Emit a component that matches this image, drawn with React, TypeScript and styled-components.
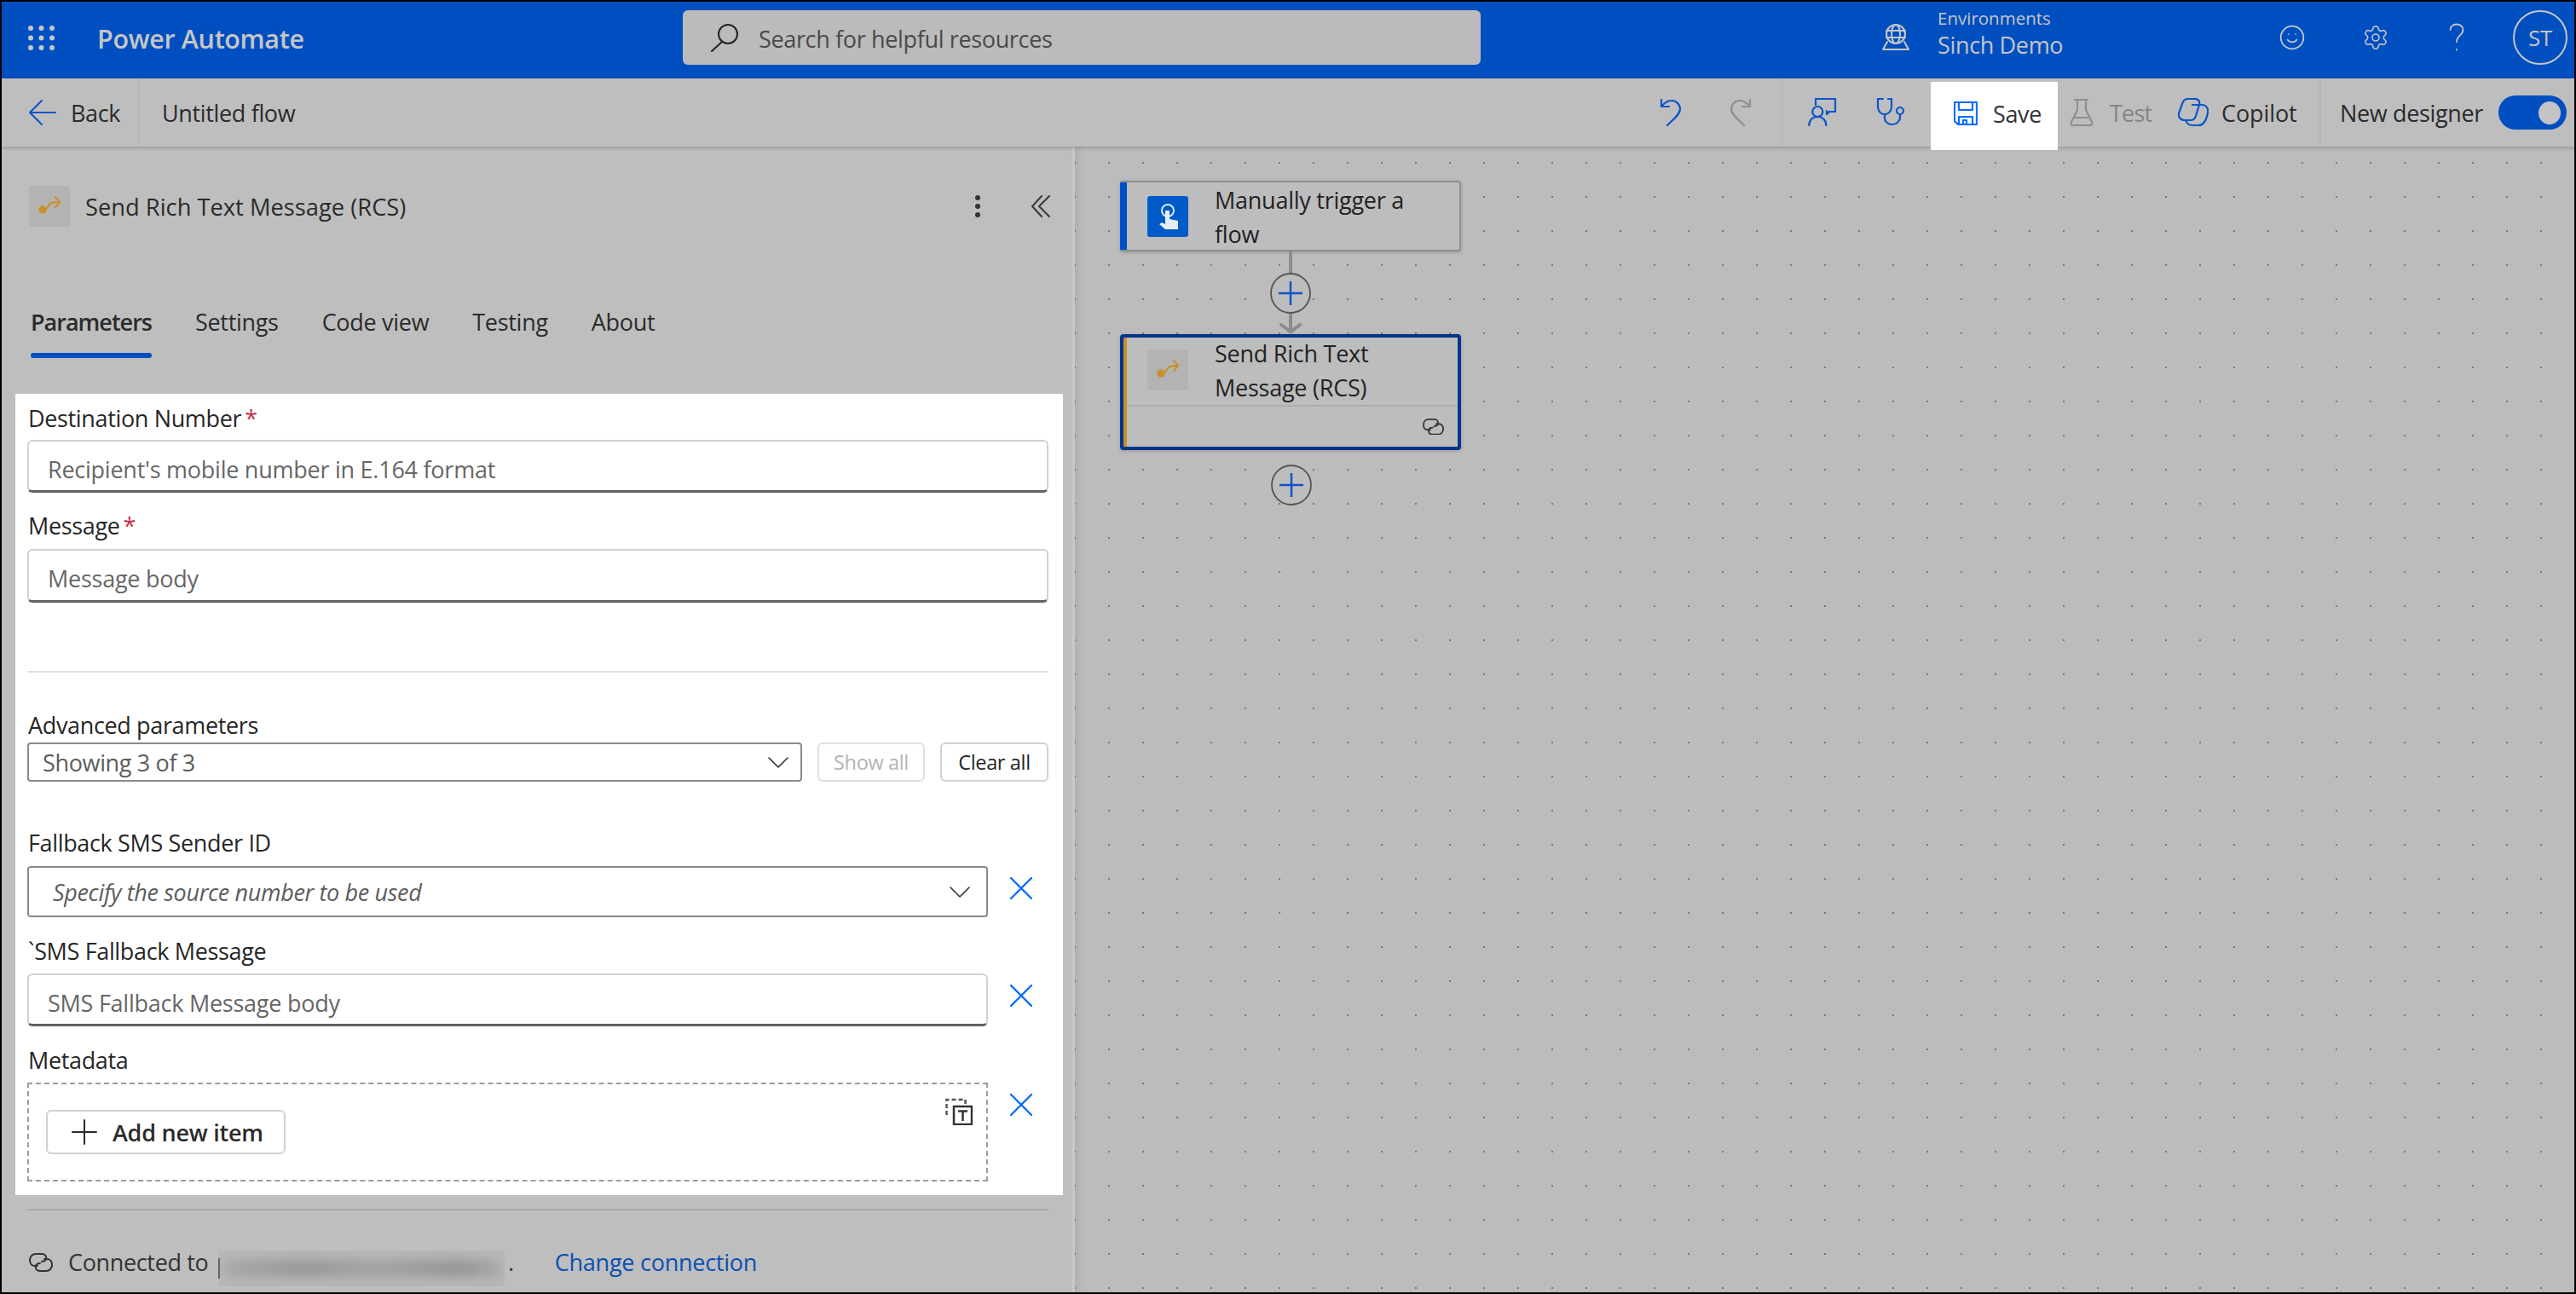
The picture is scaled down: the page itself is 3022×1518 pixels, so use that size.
import React from 'react';
import styled, { createGlobalStyle } from 'styled-components';
import { Settings, Smile } from 'lucide-react';

const GlobalStyle = createGlobalStyle`
  html, body {
    margin: 0;
    padding: 0;
    background: #000;
  }
  * {
    box-sizing: border-box;
  }
`;

const Page = styled.div`
  width: 3022px;
  height: 1518px;
  border: 2px solid #000;
  overflow: hidden;
  display: flex;
  flex-direction: column;
  background: #bdbdbd;
  color: #2b2b2b;
  font-family: 'Open Sans', 'Liberation Sans', sans-serif;
  font-size: 27px;
  letter-spacing: -0.35px;
`;

/* top blue bar */
const Header = styled.header`
  height: 90px;
  flex: none;
  display: flex;
  align-items: center;
  padding-bottom: 6px;
  background: #004fc0;
  color: #c6c6c6;
`;

const Brand = styled.div`
  width: 799px;
  flex: none;
  display: flex;
  align-items: center;
  padding-left: 31px;
`;

const ProductName = styled.span`
  margin-left: 50px;
  padding-top: 2px;
  font-size: 30.5px;
  font-weight: 600;
`;

const SearchBox = styled.div`
  width: 936px;
  height: 64px;
  flex: none;
  display: flex;
  align-items: center;
  gap: 23px;
  padding-left: 32px;
  border-radius: 6px;
  background: #bbb;
  color: #4a4a4a;

  > span {
    padding-top: 3px;
  }
`;

const EnvIcon = styled.svg`
  margin-left: 471px;
  flex: none;
`;

const EnvText = styled.div`
  width: 400px;
  flex: none;
  margin-left: 33px;
  align-self: flex-start;
  padding-top: 5px;
`;

const EnvLabel = styled.div`
  font-size: 20.5px;
  line-height: 28px;
  letter-spacing: 0;
`;

const EnvName = styled.div`
  font-size: 27px;
  line-height: 36px;
`;

const HeaderIcon = styled.div<{ $left: number }>`
  width: 32px;
  flex: none;
  margin-left: ${p => p.$left}px;
  display: flex;
  justify-content: center;
`;

const Avatar = styled.div`
  width: 64px;
  height: 64px;
  flex: none;
  margin-left: 50px;
  display: flex;
  align-items: center;
  justify-content: center;
  border: 2px solid #c6c6c6;
  border-radius: 50%;
  font-size: 26px;
`;

/* second bar */
const Toolbar = styled.div`
  position: relative;
  z-index: 2;
  height: 80px;
  flex: none;
  display: flex;
  align-items: center;
  background: #bebebe;
  box-shadow: 0 1px 5px rgba(0, 0, 0, 0.25);
`;

const BackCell = styled.div`
  width: 162px;
  height: 80px;
  display: flex;
  align-items: center;
  gap: 17px;
  padding-left: 32px;
  border-right: 2px solid #b5b5b5;
`;

const FlowName = styled.span`
  margin-left: 26px;
`;

const ToolRow = styled.div`
  margin-left: auto;
  height: 80px;
  display: flex;
  align-items: center;
  padding-right: 9px;
`;

const Tool = styled.div`
  width: 80px;
  display: flex;
  justify-content: center;
`;

const ToolDivider = styled.div<{ $left: number; $right: number }>`
  width: 2px;
  height: 80px;
  margin: 0 ${p => p.$right}px 0 ${p => p.$left}px;
  background: #b5b5b5;
`;

const SaveButton = styled.div`
  align-self: flex-start;
  width: 149px;
  height: 80px;
  margin-top: 4px;
  margin-left: 7px;
  display: flex;
  align-items: center;
  gap: 18px;
  padding: 0 0 6px 27px;
  background: #fff;
  color: #333;
`;

const LabelTool = styled.div<{ $w: number; $pad: number; $gap: number; $muted?: boolean }>`
  width: ${p => p.$w}px;
  display: flex;
  align-items: center;
  gap: ${p => p.$gap}px;
  padding-left: ${p => p.$pad}px;
  color: ${p => (p.$muted ? '#858585' : '#2b2b2b')};
  letter-spacing: ${p => (p.$muted ? '-0.8px' : '-0.1px')};
`;

const DesignerLabel = styled.div`
  width: 186px;
  margin-left: 22px;
`;

const Toggle = styled.div`
  width: 80px;
  height: 40px;
  display: flex;
  align-items: center;
  justify-content: flex-end;
  padding-right: 7px;
  border-radius: 20px;
  background: #004fc0;
`;

const ToggleKnob = styled.div`
  width: 26px;
  height: 27px;
  border-radius: 50%;
  background: #c4c4c4;
`;

const Body = styled.div`
  flex: 1;
  min-height: 0;
  display: flex;
`;

/* left panel */
const Panel = styled.aside`
  width: 1256px;
  flex: none;
  display: flex;
  flex-direction: column;
  background: #bebebe;
`;

const PanelHead = styled.div`
  height: 48px;
  margin-top: 46px;
  display: flex;
  align-items: center;
  padding-left: 32px;
`;

const ConnectorTile = styled.div`
  width: 48px;
  height: 48px;
  flex: none;
  border-radius: 3px;
  background: #b3b3b3;
`;

const PanelTitle = styled.span`
  margin-left: 18px;
  font-size: 27.3px;
  letter-spacing: 0;
`;

const PanelTools = styled.div`
  margin-left: auto;
  display: flex;
  align-items: center;
  gap: 59px;
  padding-right: 26px;
`;

const Tabs = styled.div`
  margin-top: 94px;
  display: flex;
  gap: 51px;
  padding-left: 34px;
`;

const Tab = styled.div<{ $active?: boolean }>`
  line-height: 36px;
  font-weight: ${p => (p.$active ? 600 : 400)};
  letter-spacing: ${p => (p.$active ? '-1px' : '-0.3px')};

  &::after {
    content: '';
    display: block;
    height: 6px;
    margin-top: 18px;
    border-radius: 3px;
    background: ${p => (p.$active ? '#004fc0' : 'transparent')};
  }
`;

const Form = styled.div`
  width: 1229px;
  height: 940px;
  margin: 42px 0 0 16px;
  padding: 12px 17px 0 14px;
  background: #fff;
`;

const FieldLabel = styled.div<{ $top?: number }>`
  height: 36px;
  line-height: 33px;
  margin-top: ${p => p.$top ?? 0}px;
  padding-left: 1px;
  color: #262626;
`;

const Required = styled.span`
  margin-left: 4px;
  color: #c4314b;
`;

const TextInput = styled.div<{ $top: number; $h: number }>`
  flex: 1;
  height: ${p => p.$h}px;
  margin-top: ${p => p.$top}px;
  display: flex;
  align-items: center;
  padding: 7px 0 0 22px;
  border: 2px solid #d1d1d1;
  border-bottom: 3px solid #616161;
  border-radius: 6px;
  color: #666;
  letter-spacing: -0.25px;
`;

const FormRule = styled.div`
  height: 2px;
  margin-top: 80px;
  background: #e0e0e0;
`;

const Select = styled.div<{ $h: number; $pad: number; $padRight: number; $italic?: boolean }>`
  flex: 1;
  height: ${p => p.$h}px;
  display: flex;
  align-items: center;
  justify-content: space-between;
  padding: 0 ${p => p.$padRight}px 0 ${p => p.$pad}px;
  border: 2px solid #8a8a8a;
  border-radius: 4px;
  color: #5c5c5c;
  font-style: ${p => (p.$italic ? 'italic' : 'normal')};
`;

const AdvancedRow = styled.div`
  margin-top: 1px;
  display: flex;
  gap: 18px;
`;

const SmallButton = styled.div<{ $w: number; $muted?: boolean }>`
  width: ${p => p.$w}px;
  height: 46px;
  flex: none;
  display: flex;
  align-items: center;
  justify-content: center;
  border: 2px solid ${p => (p.$muted ? '#e0e0e0' : '#d1d1d1')};
  border-radius: 6px;
  font-size: 23.5px;
  color: ${p => (p.$muted ? '#b3b3b3' : '#262626')};
`;

const RemovableRow = styled.div<{ $top: number }>`
  margin-top: ${p => p.$top}px;
  display: flex;
  align-items: flex-start;
  gap: 26px;
  width: 1179px;

  > svg {
    flex: none;
    margin-top: 13px;
  }
`;

const DashedBox = styled.div`
  flex: 1;
  height: 116px;
  display: flex;
  align-items: flex-start;
  justify-content: space-between;
  padding: 16px 16px 0 20px;
  border: 2px dashed #9c9c9c;
`;

const AddButton = styled.div`
  width: 281px;
  height: 52px;
  margin-top: 14px;
  display: flex;
  align-items: center;
  gap: 18px;
  padding-left: 28px;
  border: 2px solid #d1d1d1;
  border-radius: 6px;
  font-weight: 600;
  letter-spacing: -0.25px;
`;

const PanelRule = styled.div`
  height: 2px;
  margin: 16px 28px 0 31px;
  background: #a8a8a8;
`;

const ConnectionRow = styled.div`
  height: 49px;
  margin-top: 41px;
  display: flex;
  align-items: flex-start;
  padding-left: 32px;
  line-height: 40px;
  color: #333;

  > svg {
    flex: none;
    margin-top: 9px;
  }
`;

const ConnectedText = styled.span`
  margin-left: 18px;
  width: 176px;
`;

const BlurredName = styled.div`
  width: 336px;
  height: 42px;
  margin-top: 6px;
  overflow: hidden;
  background: linear-gradient(#5e5e5e, #5e5e5e) left 9px / 2px 24px no-repeat, #b7b7b7;
`;

const BlurredInk = styled.div`
  width: 322px;
  height: 20px;
  margin: 11px 0 0 8px;
  background: linear-gradient(90deg, #a8a8a8 0%, #989898 28%, #a4a4a4 55%, #969696 85%, #a8a8a8 100%);
  filter: blur(6px);
`;

const Dot = styled.span`
  margin-left: 4px;
`;

const ChangeLink = styled.span`
  margin-left: 48px;
  color: #0b4fb3;
  letter-spacing: -0.25px;
`;

const Splitter = styled.div`
  width: 3px;
  flex: none;
  background: #c8c8c8;
`;

/* designer canvas */
const Canvas = styled.main`
  flex: 1;
  display: flex;
  flex-direction: column;
  padding: 40px 0 0 53px;
  background-color: #bcbcbc;
  background-image: radial-gradient(circle, #7a7a7a 1px, transparent 1.4px);
  background-size: 40px 40px;
  background-position: 20px -1px;
  box-shadow: inset 12px 0 12px -10px rgba(0, 0, 0, 0.1);
`;

const Node = styled.div<{ $selected?: boolean; $accent: string }>`
  width: 400px;
  height: ${p => (p.$selected ? 136 : 83)}px;
  flex: none;
  border: ${p => (p.$selected ? '4px solid #00358c' : '2px solid #8f8f8f')};
  border-left-color: ${p => (p.$selected ? '#00358c' : p.$accent)};
  border-radius: 4px;
  background: #bdbdbd;
  box-shadow: 0 1px 4px rgba(0, 0, 0, 0.2);
`;

const NodeBody = styled.div<{ $selected?: boolean; $accent: string }>`
  height: 100%;
  display: flex;
  border-left: ${p => (p.$selected ? 4 : 6)}px solid ${p => p.$accent};
`;

const NodeHead = styled.div`
  height: 79px;
  display: flex;
  align-items: flex-start;
  padding-left: 24px;
`;

const NodeTile = styled.div<{ $blue?: boolean; $top: number }>`
  width: 48px;
  height: 48px;
  flex: none;
  margin-top: ${p => p.$top}px;
  border-radius: 3px;
  background: ${p => (p.$blue ? '#005ac8' : '#b3b3b3')};
`;

const NodeName = styled.div<{ $top: number }>`
  margin: ${p => p.$top}px 0 0 31px;
  line-height: 40px;
  color: #222;
  letter-spacing: -0.25px;
`;

const NodeColumn = styled.div`
  flex: 1;
`;

const NodeFoot = styled.div`
  height: 49px;
  display: flex;
  justify-content: flex-end;
  align-items: center;
  padding-right: 16px;
  border-top: 2px solid #adadad;
`;

const Connector = styled.svg`
  display: block;
  flex: none;
  margin-left: 170px;
`;

const AddStep = styled.svg`
  display: block;
  flex: none;
  margin: 17px 0 0 177px;
`;

const Line = {
  fill: 'none',
  stroke: 'currentColor',
  strokeWidth: 2,
  strokeLinecap: 'round',
  strokeLinejoin: 'round',
} as const;

const ConnectorGlyph = ({ size }: { size: number }) => (
  <svg width={size} height={size} viewBox="0 0 48 48">
    <circle cx="16" cy="28" r="4.7" fill="#c8902b" />
    <path d="M16 28c6 0 6-4 8-6 2-3 6-3 12-3M31 13l5 6-5 6" fill="none" stroke="#c8902b" strokeWidth="2" strokeLinecap="round" strokeLinejoin="round" />
  </svg>
);

const LinkGlyph = ({ width }: { width: number }) => (
  <svg width={width} height={(width * 22) / 28} viewBox="0 0 28 22" fill="none" stroke="#333" strokeWidth="2" strokeLinecap="round">
    <path d="M10 15H7C3 15 1 12 1 8.500 1 4 4 1 8 1h7c4 0 6 3 5 6-.5 2-3 3-5 3" />
    <path d="M18 7h3c4 0 6 3 6 6.500 0 4.500-3 7.500-7 7.500h-7c-4 0-6-3-5-6 .5-2 3-3 5-3" />
  </svg>
);

const PlusCircle = () => (
  <>
    <circle cx="24" cy="24" r="23" fill="#bdbdbd" stroke="#555" strokeWidth="1.8" />
    <path d="M24 10v28M10 24h28" stroke="#0a55c8" strokeWidth="2.5" />
  </>
);

const Chevron = () => (
  <svg width="24" height="13" viewBox="0 0 24 13" fill="none" stroke="#333" strokeWidth="1.6" strokeLinecap="round" strokeLinejoin="round">
    <path d="m1 1 11 11L23 1" />
  </svg>
);

const RemoveIcon = () => (
  <svg width="26" height="26" viewBox="0 0 26 26" fill="none" stroke="#0a6cff" strokeWidth="2.4" strokeLinecap="round">
    <path d="m1 1 24 24M25 1 1 25" />
  </svg>
);

const App = () => (
  <Page>
    <GlobalStyle />
    <Header>
      <Brand>
        <svg width="31" height="29" viewBox="0 0 31 29" fill="#c6c6c6">
          {[3, 15.5, 28].map(x =>
            [3, 14.5, 26].map(y => <circle key={`${x}-${y}`} cx={x} cy={y} r="3" />),
          )}
        </svg>
        <ProductName>Power Automate</ProductName>
      </Brand>
      <SearchBox>
        <svg width="34" height="34" viewBox="0 0 34 34" {...Line} color="#222">
          <circle cx="21" cy="13" r="11" />
          <path d="M14 22 2 33" />
        </svg>
        <span>Search for helpful resources</span>
      </SearchBox>
      <EnvIcon width="32" height="32" viewBox="0 0 32 32" {...Line} color="#c6c6c6">
        <circle cx="16" cy="12" r="11" />
        <ellipse cx="16" cy="12" rx="5" ry="11" />
        <path d="M5 8h22M5 16h22M6 21 1 30h30l-5-9" />
      </EnvIcon>
      <EnvText>
        <EnvLabel>Environments</EnvLabel>
        <EnvName>Sinch Demo</EnvName>
      </EnvText>
      <HeaderIcon $left={0}>
        <Smile size={38} strokeWidth={1.3} />
      </HeaderIcon>
      <HeaderIcon $left={66}>
        <Settings size={42} strokeWidth={1.2} />
      </HeaderIcon>
      <HeaderIcon $left={63}>
        <svg width="18" height="34" viewBox="0 0 18 34" {...Line} strokeWidth={1.8}>
          <path d="M1.500 8c0-4 3.500-6.500 7.500-6.500s7.500 2.500 7.500 6.500c0 6-7.500 7-7.500 14" />
          <path d="M9 31v.5" />
        </svg>
      </HeaderIcon>
      <Avatar>ST</Avatar>
    </Header>

    <Toolbar>
      <BackCell>
        <svg width="32" height="30" viewBox="0 0 32 30" {...Line} color="#0a55c8">
          <path d="M15 1 1 15l14 14M1 15h30" />
        </svg>
        <span>Back</span>
      </BackCell>
      <FlowName>Untitled flow</FlowName>
      <ToolRow>
        <Tool>
          <svg width="32" height="36" viewBox="0 0 32 36" {...Line} strokeWidth={2.2} color="#0a55c8">
            <path d="M4 3v8h9M4 11c4-5 8-7 12-7 6 0 10 5 10 10 0 6-8 12-15 19" />
          </svg>
        </Tool>
        <Tool>
          <svg width="32" height="36" viewBox="0 0 32 36" {...Line} strokeWidth={2.2} color="#8f8f8f">
            <path d="M28 3v8h-9M28 11c-4-5-8-7-12-7C10 4 6 9 6 14c0 6 8 12 15 19" />
          </svg>
        </Tool>
        <ToolDivider $left={9} $right={6} />
        <Tool>
          <svg width="34" height="34" viewBox="0 0 34 34" {...Line} strokeWidth={2.2} color="#0a55c8">
            <path d="M9 8V1h23v15h-7l-3 3v-4" />
            <circle cx="11.3" cy="16" r="6" />
            <path d="M1.300 32c0-6 4-10 10-10s10 4 10 10" />
          </svg>
        </Tool>
        <Tool>
          <svg width="36" height="36" viewBox="0 0 36 36" {...Line} strokeWidth={2.2} color="#0a55c8">
            <path d="M9 2H3v9c0 5 3 9 8 9s8-4 8-9V2h-4" />
            <path d="M11 20v5c0 4 4 7 9 7s9-4 9-8v-4" />
            <circle cx="29" cy="16" r="4" />
          </svg>
        </Tool>
        <SaveButton>
          <svg width="28" height="28" viewBox="0 0 28 28" {...Line} strokeWidth={2.2} color="#0a6cff">
            <path d="M1 1h26v26H5l-4-4zM6 1v9h16V1M6 27v-9h16v9M11 27v-5h4v5" />
          </svg>
          <span>Save</span>
        </SaveButton>
        <LabelTool $w={126} $pad={14} $gap={19} $muted>
          <svg width="28" height="32" viewBox="0 0 28 32" {...Line} strokeWidth={2.2} color="#8f8f8f">
            <path d="M6 1h15M9 1v12L2 27c-1 2 0 4 2 4h20c2 0 3-2 2-4l-7-14V1M5 22h18" />
          </svg>
          <span>Test</span>
        </LabelTool>
        <LabelTool $w={181} $pad={15} $gap={15}>
          <svg width="36" height="34" viewBox="0 0 36 34" {...Line} strokeWidth={2.2} color="#0a55c8">
            <path d="M12 1h8c4 0 6 3 5 7l-4 13c-1 3-3 5-6 5H8c-5 0-8-4-7-8L5 7c1-4 4-6 7-6z" />
            <path d="M17 8h11c5 0 8 4 7 9-1 6-4 15-11 15h-7c-4 0-7-3-8-6" />
          </svg>
          <span>Copilot</span>
        </LabelTool>
        <ToolDivider $left={0} $right={0} />
        <DesignerLabel>New designer</DesignerLabel>
        <Toggle>
          <ToggleKnob />
        </Toggle>
      </ToolRow>
    </Toolbar>

    <Body>
      <Panel>
        <PanelHead>
          <ConnectorTile>
            <ConnectorGlyph size={48} />
          </ConnectorTile>
          <PanelTitle>Send Rich Text Message (RCS)</PanelTitle>
          <PanelTools>
            <svg width="8" height="28" viewBox="0 0 8 28" fill="#333">
              <circle cx="4" cy="4" r="3" />
              <circle cx="4" cy="14" r="3" />
              <circle cx="4" cy="24" r="3" />
            </svg>
            <svg width="22" height="26" viewBox="0 0 22 26" {...Line} color="#3a3a3a">
              <path d="M12 1 1 13l11 12M21 1 9 13l12 12" />
            </svg>
          </PanelTools>
        </PanelHead>
        <Tabs>
          <Tab $active>Parameters</Tab>
          <Tab>Settings</Tab>
          <Tab>Code view</Tab>
          <Tab>Testing</Tab>
          <Tab>About</Tab>
        </Tabs>
        <Form>
          <FieldLabel>
            Destination Number<Required>*</Required>
          </FieldLabel>
          <TextInput $top={6} $h={62}>Recipient's mobile number in E.164 format</TextInput>
          <FieldLabel $top={22}>
            Message<Required>*</Required>
          </FieldLabel>
          <TextInput $top={8} $h={63}>Message body</TextInput>
          <FormRule />
          <FieldLabel $top={45}>Advanced parameters</FieldLabel>
          <AdvancedRow>
            <Select $h={46} $pad={16} $padRight={14}>
              Showing 3 of 3
              <Chevron />
            </Select>
            <SmallButton $w={126} $muted>Show all</SmallButton>
            <SmallButton $w={127}>Clear all</SmallButton>
          </AdvancedRow>
          <FieldLabel $top={55}>Fallback SMS Sender ID</FieldLabel>
          <RemovableRow $top={8}>
            <Select $h={60} $pad={28} $padRight={19} $italic>
              Specify the source number to be used
              <Chevron />
            </Select>
            <RemoveIcon />
          </RemovableRow>
          <FieldLabel $top={23}>`SMS Fallback Message</FieldLabel>
          <RemovableRow $top={7}>
            <TextInput $top={0} $h={62}>SMS Fallback Message body</TextInput>
            <RemoveIcon />
          </RemovableRow>
          <FieldLabel $top={23}>Metadata</FieldLabel>
          <RemovableRow $top={7}>
            <DashedBox>
              <AddButton>
                <svg width="30" height="30" viewBox="0 0 30 30" {...Line}>
                  <path d="M15 1v28M1 15h28" />
                </svg>
                Add new item
              </AddButton>
              <svg width="32" height="32" viewBox="0 0 32 32" fill="none" stroke="#333">
                <path d="M1.500 20V2h22v7" strokeWidth="2.500" strokeDasharray="5 3" stroke="#555" />
                <rect x="10" y="10" width="21" height="21" strokeWidth="2.5" />
                <path d="M15 15.500h11M20.500 15.500V27" strokeWidth="2.5" />
              </svg>
            </DashedBox>
            <RemoveIcon />
          </RemovableRow>
        </Form>
        <PanelRule />
        <ConnectionRow>
          <LinkGlyph width={28} />
          <ConnectedText>Connected to</ConnectedText>
          <BlurredName>
            <BlurredInk />
          </BlurredName>
          <Dot>.</Dot>
          <ChangeLink>Change connection</ChangeLink>
        </ConnectionRow>
      </Panel>
      <Splitter />
      <Canvas>
        <Node $accent="#0050c8">
          <NodeBody $accent="#0050c8">
            <NodeHead>
              <NodeTile $blue $top={16}>
                <svg width="48" height="48" viewBox="0 0 48 48">
                  <circle cx="24" cy="17" r="7" fill="none" stroke="#d7e4f7" strokeWidth="2" />
                  <path d="M21 17h5v10l10 2v10H21l-7-6 3-2 4 2z" fill="#e8eef8" />
                </svg>
              </NodeTile>
              <NodeName $top={1}>
                Manually trigger a
                <br />
                flow
              </NodeName>
            </NodeHead>
          </NodeBody>
        </Node>
        <Connector width="60" height="97" viewBox="0 0 60 97">
          <path d="M30 0v26M30 70v24M19 86l11 8 11-8" fill="none" stroke="#8c8c8c" strokeWidth="4" strokeLinecap="round" />
          <g transform="translate(6 25)">
            <PlusCircle />
          </g>
        </Connector>
        <Node $selected $accent="#c8902b">
          <NodeBody $selected $accent="#c8902b">
            <NodeColumn>
              <NodeHead>
                <NodeTile $top={14}>
                  <ConnectorGlyph size={48} />
                </NodeTile>
                <NodeName $top={-1}>
                  Send Rich Text
                  <br />
                  Message (RCS)
                </NodeName>
              </NodeHead>
              <NodeFoot>
                <LinkGlyph width={25} />
              </NodeFoot>
            </NodeColumn>
          </NodeBody>
        </Node>
        <AddStep width="48" height="48" viewBox="0 0 48 48">
          <PlusCircle />
        </AddStep>
      </Canvas>
    </Body>
  </Page>
);

export default App;
